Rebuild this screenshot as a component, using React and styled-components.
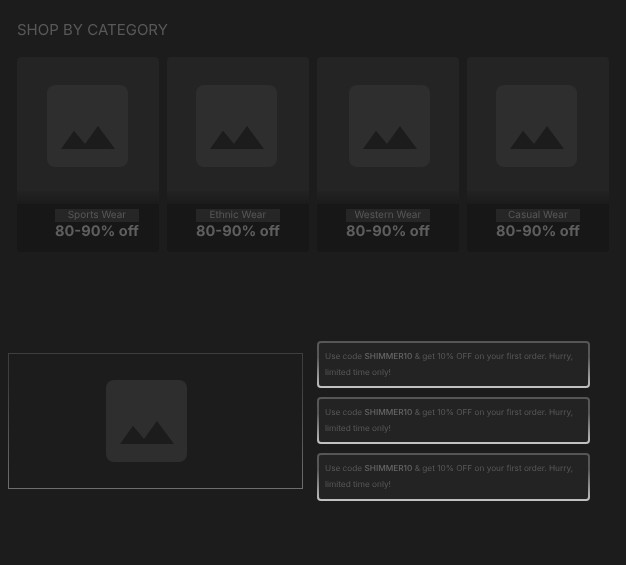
import React from "react";
import styled, { createGlobalStyle, css } from "styled-components";

const Global = createGlobalStyle`
  html, body { margin: 0; padding: 0; background: #1c1c1c; }
  body {
    font-family: Inter, "Liberation Sans", sans-serif;
    text-rendering: geometricPrecision;
    -webkit-font-smoothing: antialiased;
  }
`;

const greyText = css`
  will-change: opacity;
`;

const Page = styled.div`
  width: 626px;
  height: 565px;
  overflow: hidden;
  background: #1c1c1c;
  display: flex;
  flex-direction: column;
`;

const Section = styled.section`
  padding: 20px 17px 0;
  display: flex;
  flex-direction: column;
  gap: 18px;
`;

const Title = styled.h2`
  ${greyText}
  margin: 0;
  font-size: 15px;
  line-height: 19px;
  font-weight: 400;
  color: #585858;
`;

const Grid = styled.div`
  display: grid;
  grid-template-columns: repeat(4, 142px);
  gap: 8px;
`;

const Card = styled.article`
  display: flex;
  flex-direction: column;
`;

const ImageArea = styled.div`
  height: 134px;
  border-radius: 4px 4px 0 0;
  background: #242424;
  display: flex;
  box-sizing: border-box;
  padding: 28px 0 0 ${p => p.$inset}px;
`;

const Fade = styled.div`
  height: 13px;
  background: linear-gradient(#222222, #1b1b1b);
`;

const Caption = styled.div`
  height: 48px;
  border-radius: 0 0 4px 4px;
  background: #171717;
  box-sizing: border-box;
  padding: 5px 0 0 ${p => p.$inset}px;
`;

const CaptionInner = styled.div`
  display: flex;
  flex-direction: column;
  width: fit-content;
`;

const Label = styled.div`
  background: #262626;
  font-size: 10px;
  line-height: 13px;
  text-align: center;
`;

const LabelText = styled.span`
  ${greyText}
  display: block;
  color: #585858;
`;

const Deal = styled.div`
  ${greyText}
  color: #5e5e5e;
  font-size: 14.6px;
  line-height: 18px;
  font-weight: 700;
  white-space: nowrap;
`;

const Tile = styled.div`
  width: 81px;
  height: 82px;
  border-radius: 8px;
  background: #2e2e2e;
  display: flex;
  align-items: flex-end;
  justify-content: center;
  box-sizing: border-box;
  padding-bottom: 18px;
  flex: none;
  margin-right: ${p => p.$shift || 0}px;
`;

const Lower = styled.div`
  display: flex;
  align-items: flex-start;
  padding: 89px 0 0 8px;
  gap: 14px;
`;

const Banner = styled.div`
  width: 295px;
  height: 136px;
  margin-top: 12px;
  box-sizing: border-box;
  border: 1px solid transparent;
  background: linear-gradient(#1c1c1c, #1c1c1c) padding-box,
    linear-gradient(#3e3e3e, #3e3e3e 20%, #6e6e6e) border-box;
  display: flex;
  align-items: center;
  justify-content: center;
`;

const Promos = styled.div`
  display: flex;
  flex-direction: column;
  gap: 8.75px;
`;

const Promo = styled.div`
  width: 273px;
  height: 47.35px;
  box-sizing: border-box;
  border: 2px solid transparent;
  border-radius: 4px;
  background: linear-gradient(#232323, #232323) padding-box,
    linear-gradient(#565656, #565656 35%, #c4c4c4 100%) border-box;
  padding: 6px 6px 0;
`;

const PromoText = styled.p`
  ${greyText}
  margin: 0;
  font-size: 8.25px;
  line-height: 15.5px;
  color: #585858;
`;

const Code = styled.b`
  font-weight: 500;
  color: #666666;
`;

const Mountains = () => (
  <svg width="54" height="23" viewBox="0 0 54 23" style={{ display: "block" }}>
    <path d="M0 23 L13 4.7 L24 18 L37 0 L54 23 Z" fill="#1c1c1c" />
  </svg>
);

const cats = [
  { name: "Sports Wear", inset: 38, tile: 30 },
  { name: "Ethnic Wear", inset: 29, tile: 29 },
  { name: "Western Wear", inset: 29, tile: 32 },
  { name: "Casual Wear", inset: 29, tile: 29 },
];

export default function App() {
  return (
    <Page>
      <Global />
      <Section>
        <Title>SHOP BY CATEGORY</Title>
        <Grid>
          {cats.map(c => (
            <Card key={c.name}>
              <ImageArea $inset={c.tile}>
                <Tile><Mountains /></Tile>
              </ImageArea>
              <Fade />
              <Caption $inset={c.inset}>
                <CaptionInner>
                  <Label><LabelText>{c.name}</LabelText></Label>
                  <Deal>80-90% off</Deal>
                </CaptionInner>
              </Caption>
            </Card>
          ))}
        </Grid>
      </Section>
      <Lower>
        <Banner>
          <Tile $shift={18}><Mountains /></Tile>
        </Banner>
        <Promos>
          {[0, 1, 2].map(i => (
            <Promo key={i}>
              <PromoText>
                Use code <Code>SHIMMER10</Code> &amp; get 10% OFF on your first order. Hurry, limited time only!
              </PromoText>
            </Promo>
          ))}
        </Promos>
      </Lower>
    </Page>
  );
}
